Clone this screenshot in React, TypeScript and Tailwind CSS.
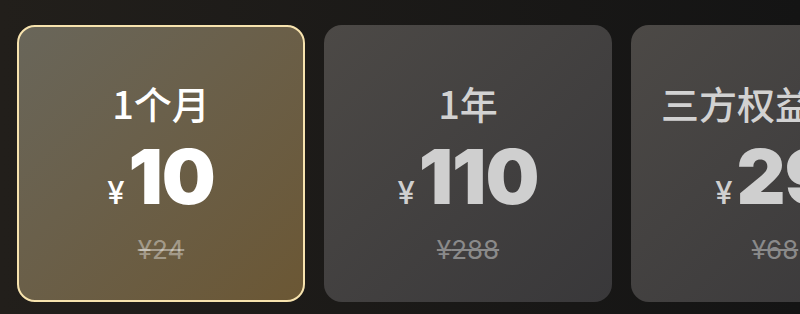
import * as React from "react";

type Plan = {
  id: string;
  title: string;
  price: string;
  original: string;
  active?: boolean;
};

const plans: Plan[] = [
  { id: "month", title: "1个月", price: "10", original: "24", active: true },
  { id: "year", title: "1年", price: "110", original: "288" },
  { id: "bundle", title: "三方权益月卡", price: "29", original: "68" },
];

const cjk = { fontFamily: '"Noto Sans CJK SC", "Noto Sans", sans-serif' };
const num = { fontFamily: 'Inter, "Noto Sans", sans-serif' };

function PlanCard({ plan }: { plan: Plan }) {
  return (
    <div
      className={
        plan.active
          ? "flex h-[277px] w-[288px] shrink-0 flex-col items-center rounded-[18px] border-[2.5px] border-[#f7e3ae] bg-gradient-to-br from-[#69665a] to-[#6b5734] pt-[57px]"
          : "flex h-[277px] w-[288px] shrink-0 flex-col items-center rounded-[18px] bg-gradient-to-br from-[#4c4946] to-[#39383a] pt-[59px]"
      }
    >
      <div
        className={
          plan.active
            ? "text-[38px] font-medium leading-none text-white"
            : "text-[38px] font-medium leading-none text-[#d2d2d2]"
        }
        style={cjk}
      >
        {plan.title}
      </div>

      <div
        className={
          plan.active
            ? "mt-[16px] flex items-baseline leading-none text-white"
            : "mt-[16px] flex items-baseline leading-none text-[#cfcfcf]"
        }
        style={num}
      >
        <span className="mr-1 text-[31px] font-medium">¥</span>
        <span className="text-[76px] font-black tracking-[-1px]">{plan.price}</span>
      </div>

      <div
        className={
          plan.active
            ? "mt-[23px] text-[26px] leading-none text-white/40 line-through"
            : "mt-[23px] text-[26px] leading-none text-[#8a8a8a] line-through"
        }
        style={num}
      >
        ¥{plan.original}
      </div>
    </div>
  );
}

export default function App() {
  return (
    <div className="h-[314px] w-[800px] overflow-hidden bg-gradient-to-r from-[#221f1b] to-[#141414]">
      <div className="flex gap-[19px] pl-[17px] pt-[25px]">
        {plans.map((plan) => (
          <PlanCard key={plan.id} plan={plan} />
        ))}
      </div>
    </div>
  );
}
